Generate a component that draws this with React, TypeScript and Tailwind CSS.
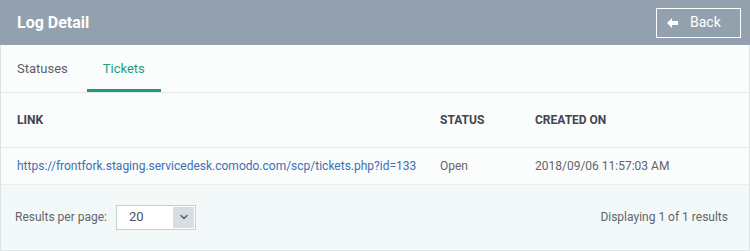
import { ChevronDown } from "lucide-react"

function BackArrow() {
  return (
    <svg width="12" height="10" viewBox="0 0 12 10" aria-hidden="true">
      <path d="M0 5 L5 0 L5 3 L11 3 L11 7 L5 7 L5 10 Z" fill="white" />
    </svg>
  )
}

export default function App() {
  return (
    <div className="h-[251px] w-[750px] bg-[#fbfcfc] font-['Roboto',sans-serif]">
      {/* Header */}
      <div className="flex h-[45px] items-center justify-between bg-[#93a1ae] pl-[17px] pr-[9px]">
        <h1 className="text-[16px] font-bold text-white">Log Detail</h1>
        <button className="flex h-[30px] w-[85px] items-center gap-[11px] border border-white pl-[10px] text-[14px] text-white">
          <BackArrow />
          <span>Back</span>
        </button>
      </div>

      <div className="h-[206px] border-x border-b border-[#dde2e5]">
        {/* Tabs */}
        <div className="flex h-[48px] border-b border-[#e6e9eb] pl-[16px] text-[13px]">
          <div className="flex items-center pr-[19px] text-[#5b6169]">Statuses</div>
          <div className="relative flex items-center px-[16px] text-[#1e9e80]">
            Tickets
            <span className="absolute bottom-0 left-0 h-[3px] w-full bg-[#1d9c7e]" />
          </div>
        </div>

        {/* Table head */}
        <div className="grid h-[55px] grid-cols-[423px_95px_1fr] items-center border-b border-[#e6e9eb] pl-[16px] text-[12px] font-bold text-[#3f4552]">
          <div>LINK</div>
          <div>STATUS</div>
          <div>CREATED ON</div>
        </div>

        {/* Row */}
        <div className="grid h-[37px] grid-cols-[423px_95px_1fr] items-center border-b border-dotted border-[#dde2e5] pl-[16px] text-[12px] text-[#5f656d]">
          <a className="text-[#3d6fb5]">https://frontfork.staging.servicedesk.comodo.com/scp/tickets.php?id=133</a>
          <div>Open</div>
          <div>2018/09/06 11:57:03 AM</div>
        </div>

        {/* Footer */}
        <div className="flex h-[64px] items-center justify-between bg-[#f3f9f9] pl-[14px] pr-[21px] text-[12px] text-[#5f656d]">
          <div className="flex items-center gap-[9px]">
            <span>Results per page:</span>
            <div className="flex h-[25px] w-[80px] items-stretch border border-[#c9ced3] bg-white">
              <span className="flex flex-1 items-center pl-[12px] text-[13px] text-[#4b5058]">20</span>
              <span className="m-px flex w-[21px] items-center justify-center bg-[#d8dde2]">
                <ChevronDown size={12} strokeWidth={3} className="text-[#5b6169]" />
              </span>
            </div>
          </div>
          <span>Displaying 1 of 1 results</span>
        </div>
      </div>
    </div>
  )
}
